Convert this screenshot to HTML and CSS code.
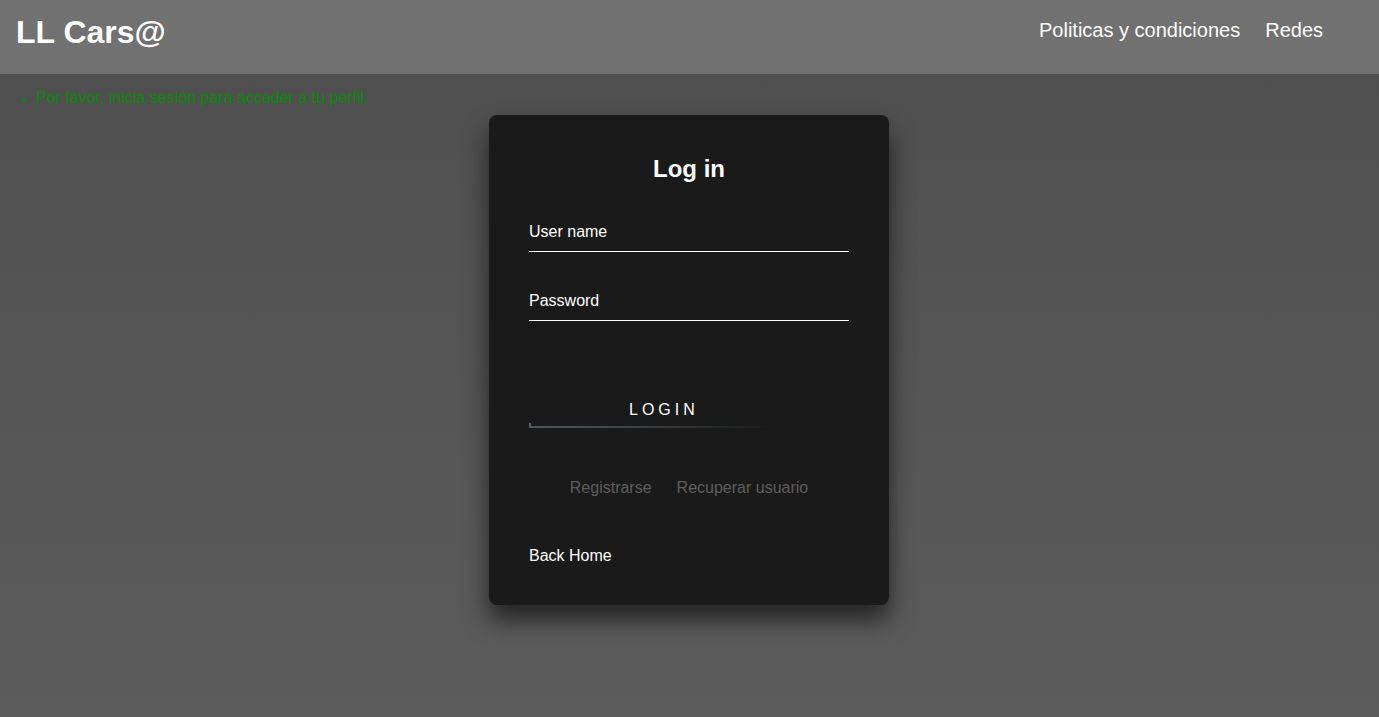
FILE: index.html
```html
<!DOCTYPE html>
<html lang="es">
<head>
<meta charset="utf-8">
<title>LL Cars@ - Log in</title>
<link rel="stylesheet" href="styles.css">
</head>
<body>
<header class="topbar">
  <h1 class="brand">LL Cars@</h1>
  <nav class="nav">
    <a href="#" class="nav-link">Politicas y condiciones</a>
    <a href="#" class="nav-link">Redes</a>
  </nav>
</header>
<main class="main">
  <ul class="messages">
    <li>Por favor, inicia sesión para acceder a tu perfil.</li>
  </ul>
  <div class="login-box">
    <h2 class="title">Log in</h2>
    <form class="form">
      <div class="user-box">
        <input type="text" placeholder="User name">
      </div>
      <div class="user-box">
        <input type="password" placeholder="Password">
      </div>
      <a href="#" class="btn">
        <span class="line-bottom"></span>
        <span class="line-left"></span>
        LOGIN
      </a>
    </form>
    <div class="links">
      <a href="#">Registrarse</a>
      <a href="#">Recuperar usuario</a>
    </div>
    <a href="#" class="back">Back Home</a>
  </div>
</main>
</body>
</html>
```
FILE: styles.css
```css
* { box-sizing: border-box; }
html, body { margin: 0; padding: 0; height: 100%; }
body {
  font-family: "Liberation Sans", Arial, sans-serif;
  background: linear-gradient(#4e4e4e, #5c5c5c);
  min-height: 717px;
  display: flex;
  flex-direction: column;
}
.topbar {
  height: 74px;
  background: #717171;
  display: flex;
  align-items: flex-start;
  justify-content: space-between;
  padding: 0 56px 0 16px;
  flex: none;
}
.brand {
  margin: 14px 0 0;
  font-size: 32px;
  line-height: 37px;
  font-weight: bold;
  color: #fff;
}
.nav {
  display: flex;
  gap: 25px;
  margin-top: 19px;
}
.nav-link {
  color: #fff;
  text-decoration: none;
  font-size: 20px;
  line-height: 23px;
}
.main {
  flex: 1;
  display: flex;
  flex-direction: column;
  align-items: center;
  padding-right: 1px;
}
.messages {
  align-self: stretch;
  margin: 15px 0 0;
  padding-left: 36px;
  color: #078a07;
  font-size: 16px;
  line-height: 18px;
}
.messages li::marker { font-size: 12px; }
.login-box {
  margin-top: 8px;
  width: 400px;
  padding: 40px;
  background: #1a1a1a;
  border-radius: 8px;
  box-shadow: 0 15px 25px rgba(0, 0, 0, 0.6);
}
.title {
  margin: 0 0 30px;
  padding: 0;
  text-align: center;
  color: #fff;
  font-size: 24px;
  line-height: 28px;
}
.form { display: flex; flex-direction: column; align-items: flex-start; }
.user-box { width: 100%; }
.user-box input {
  width: 100%;
  display: block;
  padding: 10px 0;
  font-size: 16px;
  line-height: 18px;
  font-family: inherit;
  color: #fff;
  margin-bottom: 30px;
  border: none;
  border-bottom: 1px solid #fff;
  outline: none;
  background: transparent;
}
.user-box input::placeholder { color: #fff; opacity: 1; }
.btn {
  position: relative;
  display: block;
  margin-top: 40px;
  padding: 10px 96px 10px 100px;
  color: #fff;
  font-size: 16px;
  line-height: 18px;
  text-decoration: none;
  letter-spacing: 4px;
  overflow: hidden;
}
.line-bottom {
  position: absolute;
  left: 0;
  bottom: 1px;
  width: 100%;
  height: 2px;
  background: linear-gradient(90deg, #4a5a5a, #3a4444 40%, rgba(40,46,46,0) 90%);
}
.line-left {
  position: absolute;
  left: 0;
  bottom: 1px;
  width: 2px;
  height: 5px;
  background: #56605f;
}
.links {
  margin-top: 50px;
  display: flex;
  justify-content: center;
  gap: 25px;
}
.links a {
  color: #5e5e5e;
  text-decoration: none;
  font-size: 16px;
  line-height: 18px;
}
.back {
  display: inline-block;
  margin-top: 50px;
  color: #fff;
  text-decoration: none;
  font-size: 16px;
  line-height: 18px;
}
```
